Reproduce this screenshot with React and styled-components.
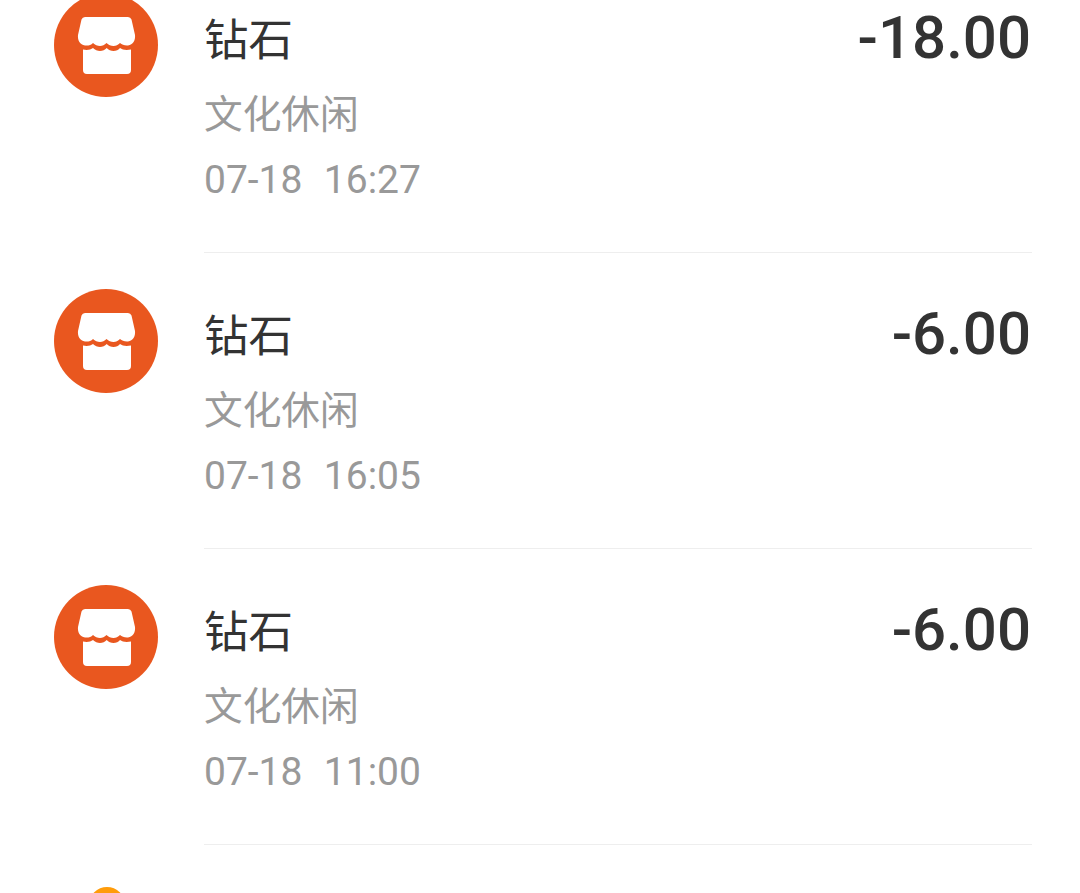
import React from 'react';
import styled, { createGlobalStyle } from 'styled-components';

const rows = [
  { id: 1, title: '钻石', kind: '文化休闲', time: '07-18  16:27', amount: '-18.00' },
  { id: 2, title: '钻石', kind: '文化休闲', time: '07-18  16:05', amount: '-6.00' },
  { id: 3, title: '钻石', kind: '文化休闲', time: '07-18  11:00', amount: '-6.00' },
];

function StoreIcon() {
  return (
    <svg width="104" height="104" viewBox="0 0 104 104">
      <circle cx="52" cy="52" r="52" fill="#e9571f" />
      <path
        d="M31 24H74a4 4 0 0 1 3.500 2.500L81 42c.6 5-2 10-7 10.500-3.500.3-6-1-8-2.500-2 2-4 3-6.500 3s-5-1-7-3c-2 2-4 3-6.500 3s-5-1-7-3c-2 2-4.500 2.800-8 2.500-5-.5-7.600-5.500-7-10.500L27.500 26.500A4 4 0 0 1 31 24z"
        fill="#fff"
      />
      <path
        d="M29 56.500c3.500 1 7.500.5 10-1.500 2 2 4.500 3 7 3s5-1 6.700-3c1.700 2 4.300 3 6.800 3s5.200-1 6.500-3c2.500 2 6.500 2.500 11 1.500V77a4 4 0 0 1-4 4H33a4 4 0 0 1-4-4z"
        fill="#fff"
      />
    </svg>
  );
}

function PartialIcon() {
  return (
    <svg width="104" height="104" viewBox="0 0 104 104">
      <circle cx="53" cy="24" r="18" fill="#ff9c0a" />
    </svg>
  );
}

export default function App() {
  return (
    <>
      <GlobalStyle />
      <Page>
        <List>
          {rows.map((row) => (
            <Row key={row.id}>
              <StoreIcon />
              <Content>
                <Info>
                  <Title>{row.title}</Title>
                  <Kind>{row.kind}</Kind>
                  <Time>{row.time}</Time>
                </Info>
                <Amount>{row.amount}</Amount>
              </Content>
            </Row>
          ))}
          <Row>
            <PartialIcon />
          </Row>
        </List>
      </Page>
    </>
  );
}

const GlobalStyle = createGlobalStyle`
  html, body {
    margin: 0;
    padding: 0;
    background: #fff;
  }
`;

const Page = styled.div`
  width: 1080px;
  height: 893px;
  overflow: hidden;
  background: #fff;
  font-family: Roboto, "Noto Sans CJK SC", sans-serif;
`;

/* list is scrolled, first row starts above the screen */
const List = styled.div`
  margin-top: -43px;
`;

const Row = styled.div`
  display: flex;
  gap: 46px;
  height: 296px;
  padding: 36px 48px 0 54px;
  box-sizing: border-box;
`;

const Content = styled.div`
  flex: 1;
  display: flex;
  justify-content: space-between;
  align-items: flex-start;
  margin-top: -36px;
  padding-top: 50px;
  box-sizing: border-box;
  border-bottom: 1px solid #eeeeee;
`;

const Info = styled.div`
  display: flex;
  flex-direction: column;
`;

const Title = styled.div`
  font-family: "Noto Sans CJK SC", sans-serif;
  font-size: 44.5px;
  line-height: 60px;
  color: #333;
`;

const Kind = styled.div`
  font-family: "Noto Sans CJK SC", sans-serif;
  font-size: 38.7px;
  line-height: 56px;
  margin-top: 16px;
  color: #999;
`;

const Time = styled.div`
  font-size: 39px;
  line-height: 50px;
  margin-top: 16px;
  word-spacing: 1px;
  color: #999;
  white-space: pre;
`;

const Amount = styled.div`
  font-family: Roboto, sans-serif;
  font-weight: 500;
  font-size: 60px;
  line-height: 70px;
  color: #333;
  margin-top: -4px;
  margin-right: 1px;
`;
